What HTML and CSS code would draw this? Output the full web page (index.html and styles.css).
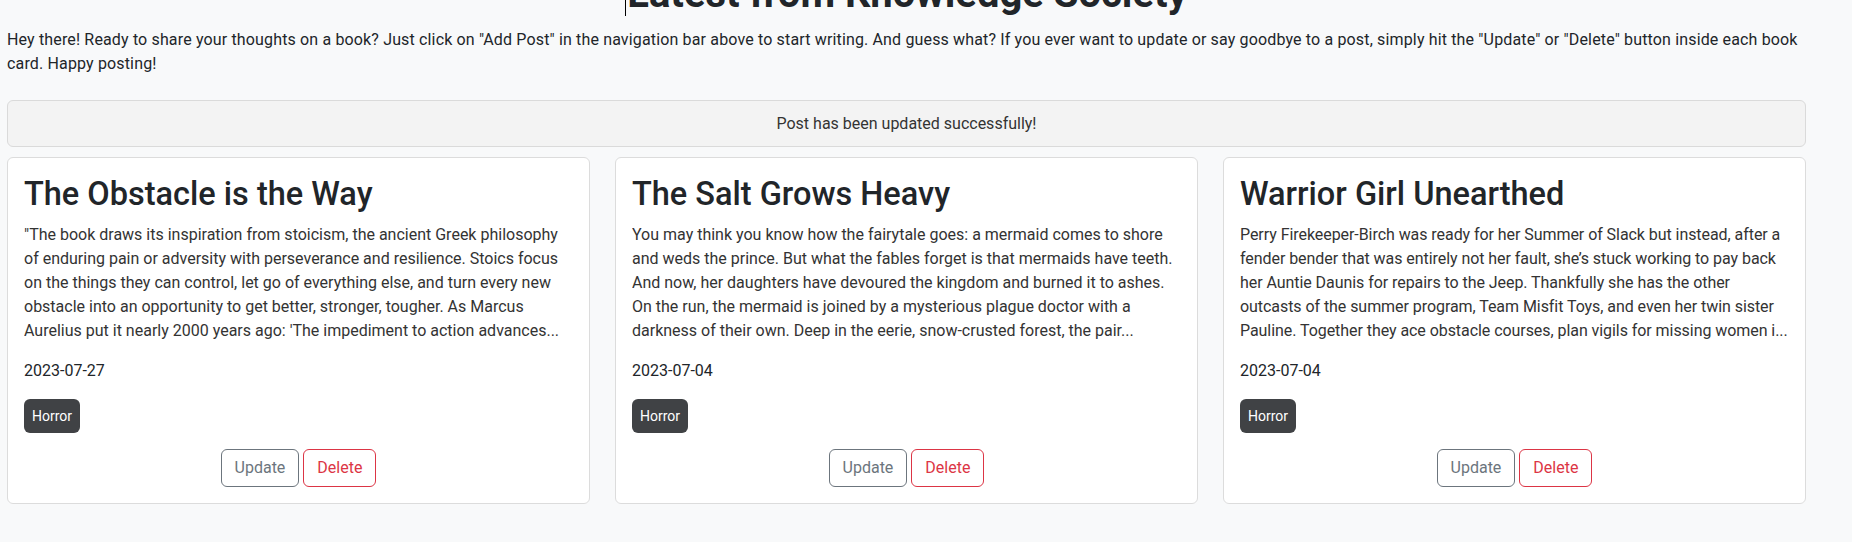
FILE: index.html
```html
<!DOCTYPE html>
<html lang="en">
<head>
<meta charset="utf-8">
<title>Latest from Knowledge Society</title>
<link rel="stylesheet" href="styles.css">
</head>
<body>
<main class="page">
  <h1 class="page-title"><span class="caret"></span>Latest from Knowledge Society</h1>
  <p class="intro">Hey there! Ready to share your thoughts on a book? Just click on "Add Post" in the navigation bar above to start writing. And guess what? If you ever want to update or say goodbye to a post, simply hit the "Update" or "Delete" button inside each book card. Happy posting!</p>
  <div class="alert">Post has been updated successfully!</div>
  <section class="cards">
    <article class="card">
      <h2 class="card-title">The Obstacle is the Way</h2>
      <p class="card-text">"The book draws its inspiration from stoicism, the ancient Greek philosophy of enduring pain or adversity with perseverance and resilience. Stoics focus on the things they can control, let go of everything else, and turn every new obstacle into an opportunity to get better, stronger, tougher. As Marcus Aurelius put it nearly 2000 years ago: 'The impediment to action advances...</p>
      <p class="card-date">2023-07-27</p>
      <div class="card-tags"><span class="badge">Horror</span></div>
      <div class="card-actions"><button class="btn btn-update">Update</button><button class="btn btn-delete">Delete</button></div>
    </article>
    <article class="card">
      <h2 class="card-title">The Salt Grows Heavy</h2>
      <p class="card-text">You may think you know how the fairytale goes: a mermaid comes to shore and weds the prince. But what the fables forget is that mermaids have teeth. And now, her daughters have devoured the kingdom and burned it to ashes. On the run, the mermaid is joined by a mysterious plague doctor with a darkness of their own. Deep in the eerie, snow-crusted forest, the pair...</p>
      <p class="card-date">2023-07-04</p>
      <div class="card-tags"><span class="badge">Horror</span></div>
      <div class="card-actions"><button class="btn btn-update">Update</button><button class="btn btn-delete">Delete</button></div>
    </article>
    <article class="card">
      <h2 class="card-title">Warrior Girl Unearthed</h2>
      <p class="card-text card-text-tight">Perry Firekeeper-Birch was ready for her Summer of Slack but instead, after a fender bender that was entirely not her fault, she’s stuck working to pay back her Auntie Daunis for repairs to the Jeep. Thankfully she has the other outcasts of the summer program, Team Misfit Toys, and even her twin sister Pauline. Together they ace obstacle courses, plan vigils for missing women i...</p>
      <p class="card-date">2023-07-04</p>
      <div class="card-tags"><span class="badge">Horror</span></div>
      <div class="card-actions"><button class="btn btn-update">Update</button><button class="btn btn-delete">Delete</button></div>
    </article>
  </section>
</main>
</body>
</html>
```

FILE: styles.css
```css
html, body {
  margin: 0;
  padding: 0;
}

body {
  background: #f8f9fa;
  color: #212529;
  font-family: Roboto, "Liberation Sans", Arial, sans-serif;
  font-size: 16px;
  line-height: 1.5;
}

.page {
  width: 1799px;
  margin: -30px 0 0 7px;
}

.page-title {
  margin: 0 0 10px;
  font-size: 40px;
  font-weight: 700;
  line-height: 48px;
  text-align: center;
  color: #212529;
}

.caret {
  display: inline-block;
  width: 1px;
  height: 46px;
  margin-right: 1px;
  background: #000;
  vertical-align: -9px;
}

.intro {
  margin: 0 0 24px;
  letter-spacing: 0.15px;
}

.alert {
  margin-bottom: 10px;
  padding: 10.5px 16px;
  border: 1px solid #dadada;
  border-radius: 6px;
  background: #f3f3f3;
  color: #333;
  text-align: center;
}

.cards {
  display: grid;
  grid-template-columns: repeat(3, 1fr);
  column-gap: 25px;
  align-items: start;
}

.card {
  padding: 16px;
  border: 1px solid #dcdcdc;
  border-radius: 6px;
  background: #fff;
}

.card-title {
  margin: 0 0 9px;
  font-size: 32.5px;
  font-weight: 500;
  line-height: 40px;
  color: #212529;
}

.card-text {
  margin: 0 0 16px;
  color: #333;
  display: -webkit-box;
  -webkit-line-clamp: 5;
  -webkit-box-orient: vertical;
  overflow: hidden;
}

.card-text-tight {
  letter-spacing: -0.06px;
}

.card-date {
  margin: 0 0 16px;
  color: #212529;
}

.card-tags {
  margin-bottom: 16px;
}

.badge {
  display: inline-block;
  padding: 6px 8px;
  border-radius: 6px;
  background: #404245;
  color: #fff;
  font-size: 14px;
  line-height: 22px;
}

.card-actions {
  display: flex;
  justify-content: center;
  gap: 4px;
}

.btn {
  padding: 6px 13px;
  border: 1px solid;
  border-radius: 6px;
  background: transparent;
  font-family: inherit;
  font-size: 16px;
  line-height: 24px;
  cursor: pointer;
}

.btn-update {
  border-color: #6c757d;
  color: #6c757d;
}

.btn-delete {
  border-color: #dc3545;
  color: #dc3545;
}
```
